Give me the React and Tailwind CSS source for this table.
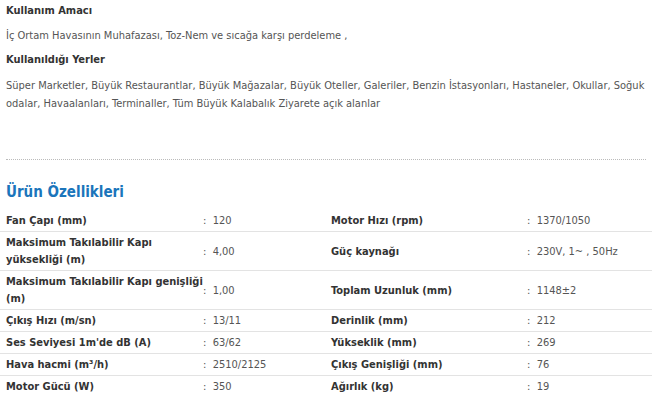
const specs = [
  [['Fan Çapı (mm)', '120'], ['Motor Hızı (rpm)', '1370/1050']],
  [['Maksimum Takılabilir Kapı yüksekliği (m)', '4,00'], ['Güç kaynağı', '230V, 1~ , 50Hz']],
  [['Maksimum Takılabilir Kapı genişliği (m)', '1,00'], ['Toplam Uzunluk (mm)', '1148±2']],
  [['Çıkış Hızı (m/sn)', '13/11'], ['Derinlik (mm)', '212']],
  [['Ses Seviyesi 1m\'de dB (A)', '63/62'], ['Yükseklik (mm)', '269']],
  [['Hava hacmi (m³/h)', '2510/2125'], ['Çıkış Genişliği (mm)', '76']],
  [['Motor Gücü (W)', '350'], ['Ağırlık (kg)', '19']],
]

export default function App() {
  return (
    <div className="w-[652px] h-[394px] overflow-hidden bg-white text-[11px] text-[#555] font-['DejaVu_Sans_Condensed','DejaVu_Sans',sans-serif]">
      {/* Description */}
      <div className="px-[6px] pt-[2px]">
        <h4 className="font-bold text-[#333] leading-[18px]">Kullanım Amacı</h4>
        <p className="mt-[7px] leading-[18px]">İç Ortam Havasının Muhafazası, Toz-Nem ve sıcağa karşı perdeleme ,</p>
        <h4 className="mt-[6px] font-bold text-[#333] leading-[18px]">Kullanıldığı Yerler</h4>
        <p className="mt-[8px] leading-[18px]">
          Süper Marketler, Büyük Restaurantlar, Büyük Mağazalar, Büyük Oteller, Galeriler, Benzin İstasyonları, Hastaneler, Okullar, Soğuk odalar, Havaalanları, Terminaller, Tüm Büyük Kalabalık Ziyarete açık alanlar
        </p>
      </div>

      <div className="mx-[6px] mt-[46px] border-t border-dotted border-[#bbb]" />

      <h3 className="mt-[22px] px-[6px] text-[15px] font-bold leading-[20px] text-[#1b75bb]">Ürün Özellikleri</h3>

      {/* Specs table */}
      <table className="mt-[8px] w-full table-fixed border-collapse">
        <colgroup>
          <col className="w-[203px]" />
          <col className="w-[123px]" />
          <col className="w-[195px]" />
          <col />
        </colgroup>
        <tbody>
          {specs.map((row, i) => (
            <tr key={i} className="border-b border-[#e3e3e3]">
              <td className="py-[2px] pl-[6px] leading-[17px] font-bold text-[#333] align-middle">{row[0][0]}</td>
              <td className="py-[2px] leading-[17px] align-middle">:&nbsp; {row[0][1]}</td>
              <td className="py-[2px] pl-[5px] leading-[17px] font-bold text-[#333] align-middle">{row[1][0]}</td>
              <td className="py-[2px] pl-[6px] leading-[17px] align-middle">:&nbsp; {row[1][1]}</td>
            </tr>
          ))}
        </tbody>
      </table>
    </div>
  )
}
